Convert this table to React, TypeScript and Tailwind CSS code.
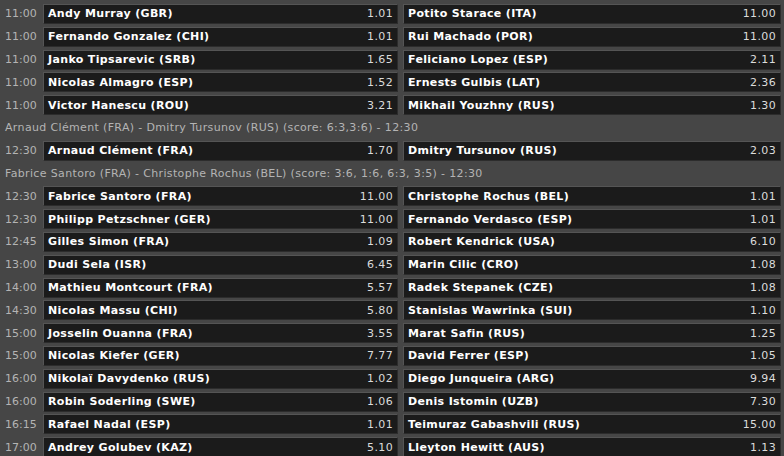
import React from 'react';

type Match = { time: string; home: string; homeOdds: string; away: string; awayOdds: string };
type Row = { kind: 'match'; m: Match } | { kind: 'live'; text: string };

const m = (time: string, home: string, homeOdds: string, away: string, awayOdds: string): Row => ({
  kind: 'match',
  m: { time, home, homeOdds, away, awayOdds },
});

const rows: Row[] = [
  m('11:00', 'Andy Murray (GBR)', '1.01', 'Potito Starace (ITA)', '11.00'),
  m('11:00', 'Fernando Gonzalez (CHI)', '1.01', 'Rui Machado (POR)', '11.00'),
  m('11:00', 'Janko Tipsarevic (SRB)', '1.65', 'Feliciano Lopez (ESP)', '2.11'),
  m('11:00', 'Nicolas Almagro (ESP)', '1.52', 'Ernests Gulbis (LAT)', '2.36'),
  m('11:00', 'Victor Hanescu (ROU)', '3.21', 'Mikhail Youzhny (RUS)', '1.30'),
  { kind: 'live', text: 'Arnaud Clément (FRA) - Dmitry Tursunov (RUS) (score: 6:3,3:6) - 12:30' },
  m('12:30', 'Arnaud Clément (FRA)', '1.70', 'Dmitry Tursunov (RUS)', '2.03'),
  { kind: 'live', text: 'Fabrice Santoro (FRA) - Christophe Rochus (BEL) (score: 3:6, 1:6, 6:3, 3:5) - 12:30' },
  m('12:30', 'Fabrice Santoro (FRA)', '11.00', 'Christophe Rochus (BEL)', '1.01'),
  m('12:30', 'Philipp Petzschner (GER)', '11.00', 'Fernando Verdasco (ESP)', '1.01'),
  m('12:45', 'Gilles Simon (FRA)', '1.09', 'Robert Kendrick (USA)', '6.10'),
  m('13:00', 'Dudi Sela (ISR)', '6.45', 'Marin Cilic (CRO)', '1.08'),
  m('14:00', 'Mathieu Montcourt (FRA)', '5.57', 'Radek Stepanek (CZE)', '1.08'),
  m('14:30', 'Nicolas Massu (CHI)', '5.80', 'Stanislas Wawrinka (SUI)', '1.10'),
  m('15:00', 'Josselin Ouanna (FRA)', '3.55', 'Marat Safin (RUS)', '1.25'),
  m('15:00', 'Nicolas Kiefer (GER)', '7.77', 'David Ferrer (ESP)', '1.05'),
  m('16:00', 'Nikolaï Davydenko (RUS)', '1.02', 'Diego Junqueira (ARG)', '9.94'),
  m('16:00', 'Robin Soderling (SWE)', '1.06', 'Denis Istomin (UZB)', '7.30'),
  m('16:15', 'Rafael Nadal (ESP)', '1.01', 'Teimuraz Gabashvili (RUS)', '15.00'),
  m('17:00', 'Andrey Golubev (KAZ)', '5.10', 'Lleyton Hewitt (AUS)', '1.13'),
];

const Pick = ({ name, odds, width }: { name: string; odds: string; width: string }) => (
  <div
    className={`${width} h-5 flex items-center justify-between bg-[#1b1b1b] border border-[#555555] border-b-[#2c2c2c] border-r-[#2c2c2c] pl-[4px] pr-[4px]`}
  >
    <span className="font-bold text-white">{name}</span>
    <span className="text-[#dcdcdc]">{odds}</span>
  </div>
);

export default function App() {
  return (
    <div
      className="w-[784px] h-[456px] overflow-hidden bg-[#464646] pt-[2.6px] text-[11px] leading-none tracking-[0.35px]"
      style={{ fontFamily: '"DejaVu Sans", Verdana, sans-serif' }}
    >
      {rows.map((r, i) =>
        r.kind === 'live' ? (
          <div key={i} className="h-[22.8px] flex items-center pl-[5px] text-[#b4b4b4] whitespace-nowrap">
            {r.text}
          </div>
        ) : (
          <div key={i} className="h-[22.8px] flex items-center">
            <div className="w-[43px] pl-[5px] text-[#b4b4b4] tracking-normal">{r.m.time}</div>
            <Pick name={r.m.home} odds={r.m.homeOdds} width="w-[355px]" />
            <div className="w-[5px]" />
            <Pick name={r.m.away} odds={r.m.awayOdds} width="w-[378px]" />
          </div>
        )
      )}
    </div>
  );
}
